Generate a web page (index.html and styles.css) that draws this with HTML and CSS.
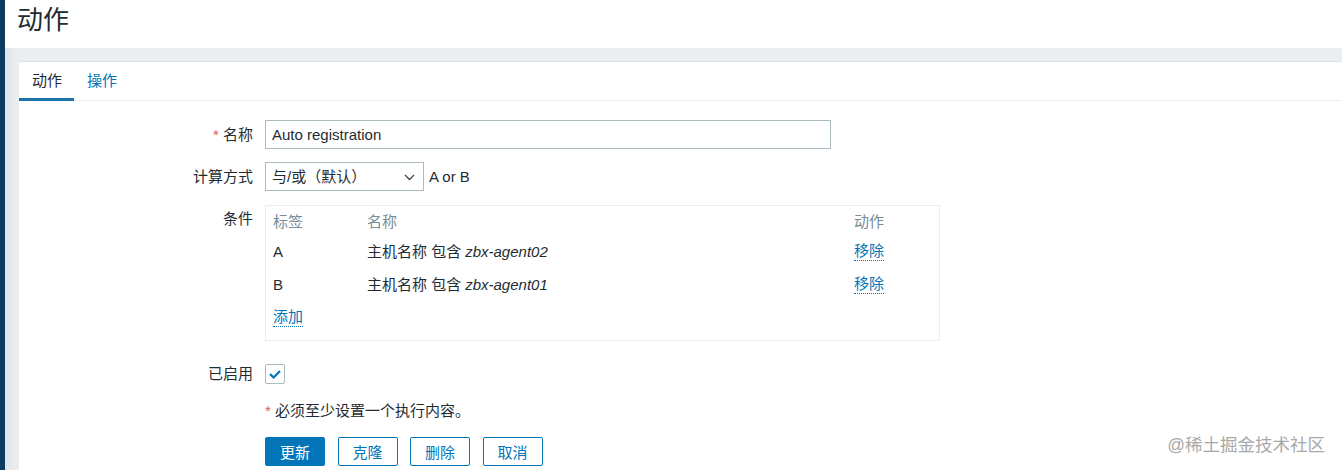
FILE: index.html
```html
<!DOCTYPE html>
<html lang="zh-CN">
<head>
<meta charset="utf-8">
<title>动作</title>
<link rel="stylesheet" href="styles.css">
</head>
<body>
<div class="layout">
  <aside class="sidebar"></aside>
  <main class="main">
    <header class="page-header"><h1 class="page-title">动作</h1></header>
    <div class="content">
      <section class="panel">
        <nav class="tabs">
          <span class="tab tab-active">动作</span>
          <span class="tab">操作</span>
        </nav>
        <form class="form">
          <div class="row row-name">
            <label class="label"><span class="req">*</span> 名称</label>
            <div class="field"><div class="input">Auto registration</div></div>
          </div>
          <div class="row row-calc">
            <label class="label">计算方式</label>
            <div class="field field-inline">
              <div class="select">
                <span>与/或（默认）</span>
                <svg class="chevron" width="11" height="7" viewBox="0 0 11 7"><polyline points="1,1 5.5,5.5 10,1" fill="none" stroke="#3a4a52" stroke-width="1.3"/></svg>
              </div>
              <span class="expr">A or B</span>
            </div>
          </div>
          <div class="row row-cond">
            <label class="label label-top">条件</label>
            <div class="field">
              <div class="cond-box">
                <div class="cond-grid">
                  <span class="th">标签</span><span class="th">名称</span><span class="th">动作</span>
                  <span class="td">A</span><span class="td">主机名称 包含 <i>zbx-agent02</i></span><span class="td"><a class="link">移除</a></span>
                  <span class="td">B</span><span class="td">主机名称 包含 <i>zbx-agent01</i></span><span class="td"><a class="link">移除</a></span>
                  <span class="td"><a class="link">添加</a></span><span class="td"></span><span class="td"></span>
                </div>
              </div>
            </div>
          </div>
          <div class="row row-enabled">
            <label class="label">已启用</label>
            <div class="field">
              <span class="checkbox"><svg width="20" height="20" viewBox="0 0 20 20"><polyline points="5,10 8.6,13.5 15,7" fill="none" stroke="#0275b8" stroke-width="2.2"/></svg></span>
            </div>
          </div>
          <div class="row row-note">
            <span class="label"></span>
            <div class="field note"><span class="req">*</span> 必须至少设置一个执行内容。</div>
          </div>
          <div class="row row-buttons">
            <span class="label"></span>
            <div class="field buttons">
              <button type="button" class="btn btn-primary">更新</button>
              <button type="button" class="btn">克隆</button>
              <button type="button" class="btn">删除</button>
              <button type="button" class="btn">取消</button>
            </div>
          </div>
        </form>
      </section>
    </div>
  </main>
</div>
<div class="watermark">@稀土掘金技术社区</div>
</body>
</html>
```
FILE: styles.css
```css
* { box-sizing: border-box; }
html, body { margin: 0; padding: 0; }
body {
  font-family: "Liberation Sans", "Noto Sans CJK SC", sans-serif;
  font-size: 15px;
  color: #1f2c33;
  background: #ffffff;
  overflow: hidden;
}
.layout { display: flex; min-height: 100vh; }
.sidebar { width: 5px; flex: none; background: #0c3d61; }
.main { flex: 1; display: flex; flex-direction: column; min-width: 0; }
.page-header { height: 48px; background: #fff; padding-left: 12px; }
.page-title { margin: 0; font-size: 26px; font-weight: normal; line-height: 40px; color: #1f2c33; }
.content {
  flex: 1;
  display: flex;
  padding: 13px 0 0 14px;
  background: linear-gradient(to right, #dfe4e7 0, #ebeef0 10px) , #ebeef0;
}
.panel { flex: 1; background: #fff; border-top: 1px solid #dde2e5; }
.tabs { display: flex; height: 39px; border-bottom: 1px solid #ebeef0; }
.tab { padding: 0 12px 0 13px; line-height: 37px; color: #0275b8; }
.tab-active { color: #1f2c33; border-bottom: 3px solid #1a72a8; margin-bottom: -1px; }
.form { padding-top: 19px; }
.row { display: grid; grid-template-columns: 234px 1fr; column-gap: 12px; align-items: center; }
.label { text-align: right; line-height: 18px; }
.label-top { align-self: start; padding-top: 5px; }
.req { color: #e45959; }
.row-calc { margin-top: 13px; }
.row-cond { margin-top: 14px; }
.row-enabled { margin-top: 23px; }
.row-note { margin-top: 18px; }
.row-buttons { margin-top: 17px; }
.input {
  width: 566px; height: 29px; border: 1px solid #acbbc2;
  padding: 0 6px; line-height: 27px; background: #fff;
}
.field-inline { display: flex; align-items: center; gap: 5px; }
.select {
  width: 159px; height: 29px; border: 1px solid #acbbc2;
  display: flex; align-items: center; justify-content: space-between;
  padding: 0 8px 0 6px; line-height: 27px;
}
.chevron { display: block; margin-top: 1px; }
.cond-box { width: 675px; height: 136px; border: 1px solid #ebeef0; padding: 3px 7px 0 7px; }
.cond-grid { display: grid; grid-template-columns: 94px 487px 1fr; grid-auto-rows: 33px; grid-template-rows: 26px; }
.th { color: #768d99; line-height: 26px; }
.td { line-height: 33px; display: flex; align-items: center; }
.td i { margin-left: 4px; font-style: italic; }
.link { color: #0275b8; border-bottom: 1px dotted #0275b8; line-height: 18px; cursor: pointer; }
.checkbox {
  display: block; width: 20px; height: 20px; border: 1px solid #acbbc2; border-radius: 2px;
}
.checkbox svg { display: block; margin: -1px 0 0 -1px; }
.note { line-height: 18px; }
.buttons { display: flex; gap: 12.5px; }
.btn {
  width: 60px; height: 29px; border: 1px solid #0275b8; border-radius: 2px;
  background: #fff; color: #0275b8; font: inherit; font-size: 15px; padding: 0;
}
.btn-primary { background: #0275b8; color: #fff; }
.watermark {
  position: absolute; right: 17px; top: 431px;
  font-size: 17.5px; color: #a9a9a9; letter-spacing: 0;
}
```
